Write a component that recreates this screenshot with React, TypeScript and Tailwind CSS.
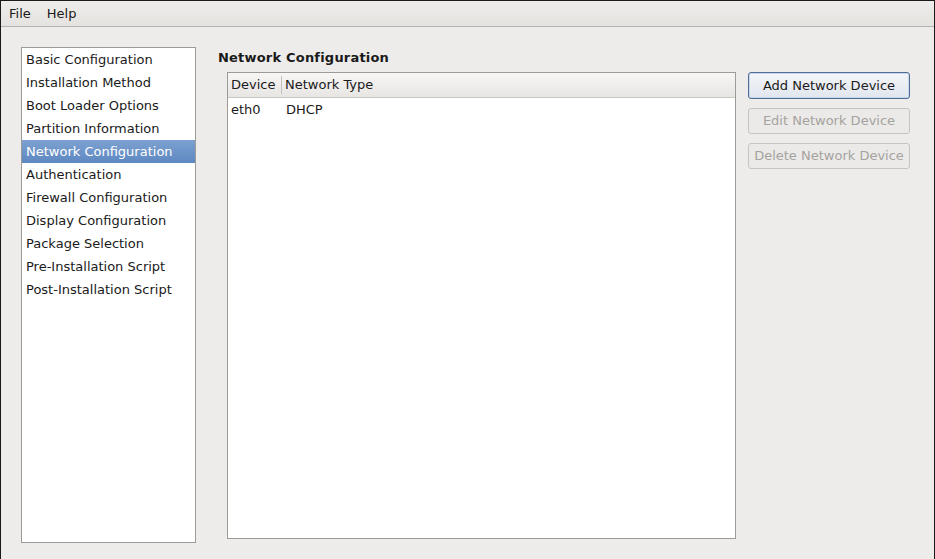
import React from "react";

const sections = [
  "Basic Configuration",
  "Installation Method",
  "Boot Loader Options",
  "Partition Information",
  "Network Configuration",
  "Authentication",
  "Firewall Configuration",
  "Display Configuration",
  "Package Selection",
  "Pre-Installation Script",
  "Post-Installation Script",
];

const devices = [{ device: "eth0", type: "DHCP" }];

export default function App() {
  return (
    <div className="flex h-[559px] w-[935px] flex-col overflow-hidden border-t border-l border-r border-[#1a1a1a] bg-[#edeceb] font-['DejaVu_Sans',sans-serif] text-[13px] text-[#1a1a1a]">
      {/* Menu bar */}
      <div className="flex h-[26px] items-center border-b border-[#b6b4b0] bg-gradient-to-b from-[#eeedeb] to-[#e5e3e0]">
        <span className="px-[8px]">File</span>
        <span className="px-[8px]">Help</span>
      </div>

      <div className="flex flex-1 pl-[20px] pt-[20px] pb-[16px]">
        {/* Section list */}
        <div className="flex w-[175px] flex-col border border-[#9d9b97] bg-white">
          {sections.map((s) => (
            <div
              key={s}
              className={
                s === "Network Configuration"
                  ? "flex h-[23px] items-center bg-gradient-to-b from-[#7da1d1] to-[#5e88c2] pl-[4px] text-white"
                  : "flex h-[23px] items-center pl-[4px]"
              }
            >
              {s}
            </div>
          ))}
        </div>

        {/* Main */}
        <div className="ml-[22px] flex flex-col">
          <div className="h-[25px] pt-[1px] font-bold tracking-[0.2px]">Network Configuration</div>
          <div className="flex">
            <div className="ml-[9px] flex h-[467px] w-[509px] flex-col border border-[#9d9b97] bg-white">
              <div className="flex h-[25px] border-b border-[#c9c7c3] bg-gradient-to-b from-[#f7f6f5] to-[#e8e6e3]">
                <div className="my-[3px] flex w-[54px] items-center border-r border-[#c4c2be] pl-[3px]">
                  Device
                </div>
                <div className="flex items-center pl-[3px]">Network Type</div>
              </div>
              {devices.map((d) => (
                <div key={d.device} className="flex h-[23px] items-center">
                  <div className="w-[54px] pl-[3px]">{d.device}</div>
                  <div className="pl-[4px]">{d.type}</div>
                </div>
              ))}
            </div>

            <div className="ml-[12px] flex w-[162px] flex-col gap-[9px]">
              <button className="h-[27px] rounded-[3px] border border-[#4f6d95] bg-gradient-to-b from-[#f3f5f9] to-[#e1e6ee] text-[#1a1a1a] shadow-[inset_0_0_0_1px_#c8d6ea]">
                Add Network Device
              </button>
              <button className="h-[26px] rounded-[3px] border border-[#c6c4c0] bg-[#ebeae8] text-[#a5a39f]">
                Edit Network Device
              </button>
              <button className="h-[26px] rounded-[3px] border border-[#c6c4c0] bg-[#ebeae8] text-[#a5a39f]">
                Delete Network Device
              </button>
            </div>
          </div>
        </div>
      </div>
    </div>
  );
}
